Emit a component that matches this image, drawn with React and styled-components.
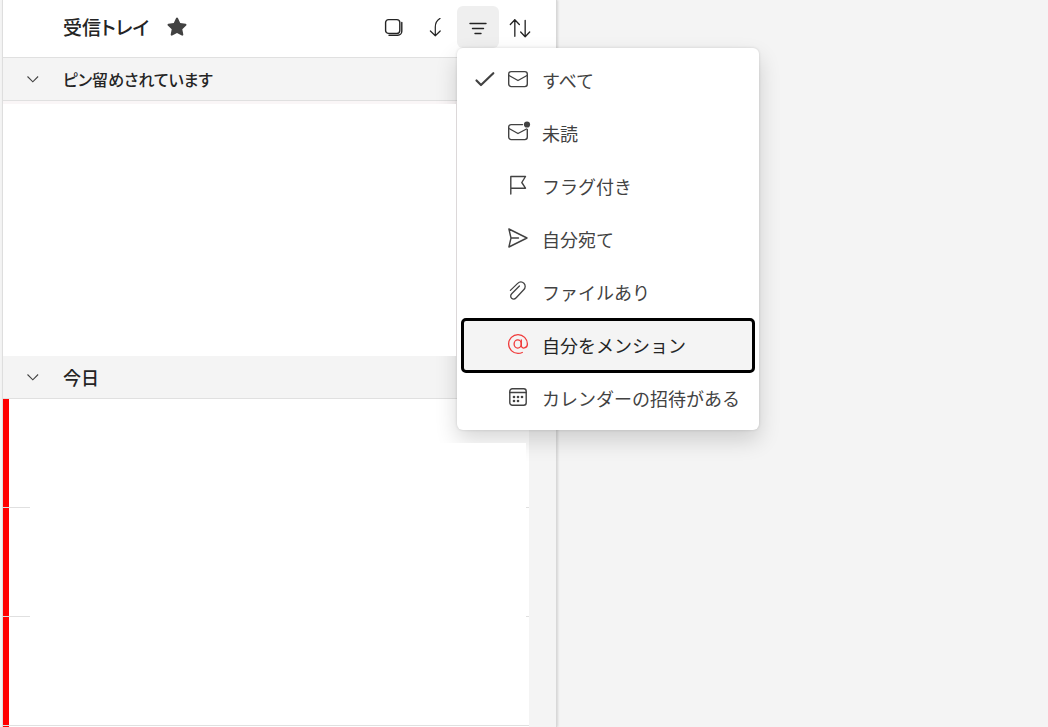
import React, { useState } from 'react';
import styled, { createGlobalStyle } from 'styled-components';

const GlobalStyle = createGlobalStyle`
  * {
    box-sizing: border-box;
  }

  body {
    margin: 0;
    background-color: #f4f4f4;
    color: #242424;
    font-family: 'Noto Sans CJK JP', 'Noto Sans', sans-serif;
  }

  button {
    border: none;
    padding: 0;
    background: none;
    color: inherit;
    font: inherit;
    cursor: pointer;
  }
`;

const Page = styled.div`
  display: flex;
  height: 100vh;
  padding-left: 2px;
  overflow: hidden;
`;

const Panel = styled.main`
  flex: 0 1 555px;
  height: 100%;
  border-left: 1px solid #dedede;
  border-right: 1px solid #d8d8d8;
  box-shadow: 1px 0 2px rgba(0, 0, 0, 0.12);
`;

const Header = styled.header`
  display: flex;
  align-items: flex-start;
  height: 58px;
  padding: 6px 15px 0 60px;
  border-bottom: 1px solid #e0e0e0;
  background-color: #fff;
`;

const Title = styled.h1`
  margin: 0 18px 0 0;
  font-size: 19px;
  font-weight: 500;
  line-height: 42px;
  white-space: nowrap;
  font-feature-settings: 'palt';
`;

const StarButton = styled.button`
  display: flex;
  align-items: center;
  height: 42px;
`;

const Tools = styled.div`
  display: flex;
  margin-left: auto;
`;

const ToolButton = styled.button`
  display: flex;
  align-items: center;
  justify-content: center;
  width: 42px;
  height: 42px;
  padding-top: 2px;
  border-radius: 6px;
  background-color: ${(props) => (props.$active ? '#efefef' : 'transparent')};
`;

const FilterWrapper = styled.div`
  position: relative;
`;

const Menu = styled.div`
  position: absolute;
  top: 100%;
  left: 0;
  z-index: 1;
  width: 302px;
  padding: 6px 5px 5px;
  border-radius: 6px;
  background-color: #fff;
  box-shadow: 0 0 3px rgba(0, 0, 0, 0.14), 0 10px 22px rgba(0, 0, 0, 0.16);
`;

const MenuItem = styled.button`
  display: grid;
  grid-template-columns: 20px 20px 1fr;
  align-items: center;
  column-gap: 14px;
  width: 100%;
  height: 53px;
  padding: 0 12px 2px;
  border-radius: 4px;
  color: #424242;
  font-size: 18px;
  line-height: 28px;
  text-align: left;
  white-space: nowrap;

  &[data-current='true'] {
    background-color: #f4f4f4;
    color: #242424;
    outline: 3px solid #000;
    outline-offset: -2px;
  }

  svg {
    margin-bottom: 2px;
    overflow: visible;
  }
`;

const MenuLabel = styled.span`
  grid-column: 3;
`;

const MenuIcon = styled.span`
  grid-column: 2;
  display: flex;
  color: ${(props) => props.$color || 'inherit'};
`;

const List = styled.div`
  margin-right: 27px;
`;

const SectionHeader = styled.h2`
  margin: 0;
  border-bottom: 1px solid #e0e0e0;
  background-color: #f4f4f4;
`;

const SectionToggle = styled.button`
  display: flex;
  align-items: center;
  gap: 23px;
  width: 100%;
  height: 42px;
  padding-left: 23px;
  font-size: ${(props) => (props.$compact ? '16px' : '18px')};
  font-weight: 500;
  line-height: 28px;
  text-align: left;
  font-feature-settings: 'palt';
`;

const PinnedArea = styled.div`
  height: 255px;
  padding-top: 3px;
  background-color: #faf6f7;
`;

const PinnedBody = styled.div`
  position: relative;
  z-index: 2;
  height: 252px;
  margin-right: 73px;
  background-color: #fff;
`;

const Row = styled.article`
  display: flex;
  height: 109px;
  border-bottom: 1px solid #e0e0e0;
  background-color: #fff;
`;

const UnreadBar = styled.div`
  width: 6px;
  background-color: #f00;
`;

const RowBody = styled.div`
  position: relative;
  z-index: 2;
  flex: 1;
  margin: ${(props) => (props.$first ? '44px' : '0')} 3px ${(props) => (props.$last ? '0' : '-1px')} 21px;
  background-color: #fff;
`;

const Icon = ({ size = 20, children, width = 1.4 }) => (
  <svg
    width={size}
    height={size}
    viewBox="0 0 20 20"
    fill="none"
    stroke="currentColor"
    strokeWidth={width}
    strokeLinecap="round"
    strokeLinejoin="round"
    aria-hidden="true"
  >
    {children}
  </svg>
);

const StarIcon = () => (
  <svg width="20" height="20" viewBox="0 0 20 20" fill="#424242" aria-hidden="true">
    <path d="M9.1 1.1c.4-.7 1.4-.7 1.8 0l2.3 4.9 5.4.7c.8.1 1.2 1.1.6 1.7l-3.9 3.8 1 5.4c.1.8-.7 1.4-1.5 1L10 16.1l-4.8 2.5c-.8.4-1.6-.2-1.5-1l1-5.4L.8 8.4c-.6-.6-.2-1.6.6-1.7L6.8 6z" />
  </svg>
);

const ChevronIcon = () => (
  <svg width="14" height="14" viewBox="0 0 14 14" fill="none" stroke="#424242" strokeWidth="1.1" aria-hidden="true">
    <path d="M1.500 4.500 6.800 9.800 12.100 4.500" />
  </svg>
);

const MailIcon = () => (
  <Icon>
    <rect x="0.7" y="2.6" width="18.6" height="15" rx="2.5" />
    <path d="M1 6.500 10 11.500 19 6.500" />
  </Icon>
);

const MailUnreadIcon = () => (
  <Icon>
    <path d="M14.500 2.600H3.200A2.500 2.500 0 0 0 .7 5.100v10a2.500 2.500 0 0 0 2.500 2.500h13.600a2.500 2.500 0 0 0 2.500-2.500V7.500" />
    <path d="M1 6.500 10 11.500 18.500 7" />
    <circle cx="19" cy="2.5" r="3.1" fill="currentColor" stroke="none" />
  </Icon>
);

const FlagIcon = () => (
  <Icon>
    <path d="M2.800 19V1.500H17.500L13.800 7.500 17.500 13.200H2.800" />
  </Icon>
);

const SendIcon = () => (
  <Icon>
    <path d="M.9 1 19 10 .9 19 3 10z M3 10H10.500" />
  </Icon>
);

const ClipIcon = () => (
  <Icon width={1.3}>
    <path d="M2.400 9.400 9.400 2.600c2-1.900 4.700-2 6.500-.3s1.700 4.500-.2 6.500l-7.500 7.900c-1.400 1.500-3.300 1.600-4.600.5s-1.200-3.100.1-4.500l7.700-7.700" />
  </Icon>
);

const MentionIcon = () => (
  <Icon width={1.3}>
    <ellipse cx="9.7" cy="10" rx="3.6" ry="4.1" />
    <path d="M13.300 5.900V11.500c0 3.900 6.100 3.200 6.100-1.500A9.400 9.400 0 1 0 10 19.400c1.700 0 3-.3 4.300-.9" />
  </Icon>
);

const CalendarIcon = () => (
  <Icon>
    <rect x="1.8" y="1.8" width="16.4" height="16.4" rx="2.5" />
    <path d="M1.800 5.500H18.200" />
    <g fill="currentColor" stroke="none">
      <circle cx="6" cy="10" r="1.3" />
      <circle cx="10" cy="10" r="1.3" />
      <circle cx="14" cy="10" r="1.3" />
      <circle cx="6" cy="14" r="1.3" />
      <circle cx="10" cy="14" r="1.3" />
    </g>
  </Icon>
);

const filters = [
  { id: 'all', label: 'すべて', icon: <MailIcon /> },
  { id: 'unread', label: '未読', icon: <MailUnreadIcon /> },
  { id: 'flagged', label: 'フラグ付き', icon: <FlagIcon /> },
  { id: 'toMe', label: '自分宛て', icon: <SendIcon /> },
  { id: 'files', label: 'ファイルあり', icon: <ClipIcon /> },
  { id: 'mentions', label: '自分をメンション', icon: <MentionIcon />, color: '#f03a3a' },
  { id: 'invites', label: 'カレンダーの招待がある', icon: <CalendarIcon /> },
];

const rows = [1, 2, 3, 4];

function Section({ title, compact }) {
  return (
    <SectionHeader>
      <SectionToggle type="button" aria-expanded="true" $compact={compact}>
        <ChevronIcon />
        {title}
      </SectionToggle>
    </SectionHeader>
  );
}

function FilterMenu({ selected, onSelect }) {
  const [current, setCurrent] = useState('mentions');

  return (
    <Menu role="menu">
      {filters.map((filter) => (
        <MenuItem
          key={filter.id}
          type="button"
          role="menuitemradio"
          aria-checked={selected === filter.id}
          data-current={current === filter.id}
          onMouseEnter={() => setCurrent(filter.id)}
          onClick={() => onSelect(filter.id)}
        >
          {selected === filter.id && (
            <Icon width={2.2}>
              <path d="M2.500 11.500 7 16 19.300 4.200" />
            </Icon>
          )}
          <MenuIcon $color={filter.color}>{filter.icon}</MenuIcon>
          <MenuLabel>{filter.label}</MenuLabel>
        </MenuItem>
      ))}
    </Menu>
  );
}

export default function App() {
  const [open, setOpen] = useState(true);
  const [selected, setSelected] = useState('all');

  return (
    <Page>
      <GlobalStyle />
      <Panel>
        <Header>
          <Title>受信トレイ</Title>
          <StarButton type="button" aria-label="お気に入り">
            <StarIcon />
          </StarButton>
          <Tools>
            <ToolButton type="button" aria-label="選択">
              <Icon>
                <rect x="1.6" y="1.6" width="14.2" height="13.8" rx="3" />
                <path d="M17.800 4.500v8.700a4 4 0 0 1-4 4H5" />
              </Icon>
            </ToolButton>
            <ToolButton type="button" aria-label="ジャンプ">
              <Icon width={1.2}>
                <path d="M14 .4C10.500 2.500 9.300 5 9.300 9V17.800 M4.400 13 9.300 17.800 14.200 13" />
              </Icon>
            </ToolButton>
            <FilterWrapper>
              <ToolButton
                type="button"
                aria-label="フィルター"
                aria-expanded={open}
                $active={open}
                onClick={() => setOpen(!open)}
              >
                <Icon>
                  <path d="M2 5.500H18 M4.500 10.500H15.500 M7 15.500H13" />
                </Icon>
              </ToolButton>
              {open && <FilterMenu selected={selected} onSelect={setSelected} />}
            </FilterWrapper>
            <ToolButton type="button" aria-label="並べ替え">
              <Icon size={22} width={1.2}>
                <path d="M5.300 17.500V2.500 M1.200 6.800 5.300 2.500 9.400 6.800 M14.700 3V18 M10.600 13.700 14.700 18 18.800 13.700" />
              </Icon>
            </ToolButton>
          </Tools>
        </Header>
        <List>
          <Section title="ピン留めされています" compact />
          <PinnedArea>
            <PinnedBody />
          </PinnedArea>
          <Section title="今日" />
          {rows.map((row) => (
            <Row key={row}>
              <UnreadBar />
              <RowBody $first={row === 1} $last={row >= 3} />
            </Row>
          ))}
        </List>
      </Panel>
    </Page>
  );
}
